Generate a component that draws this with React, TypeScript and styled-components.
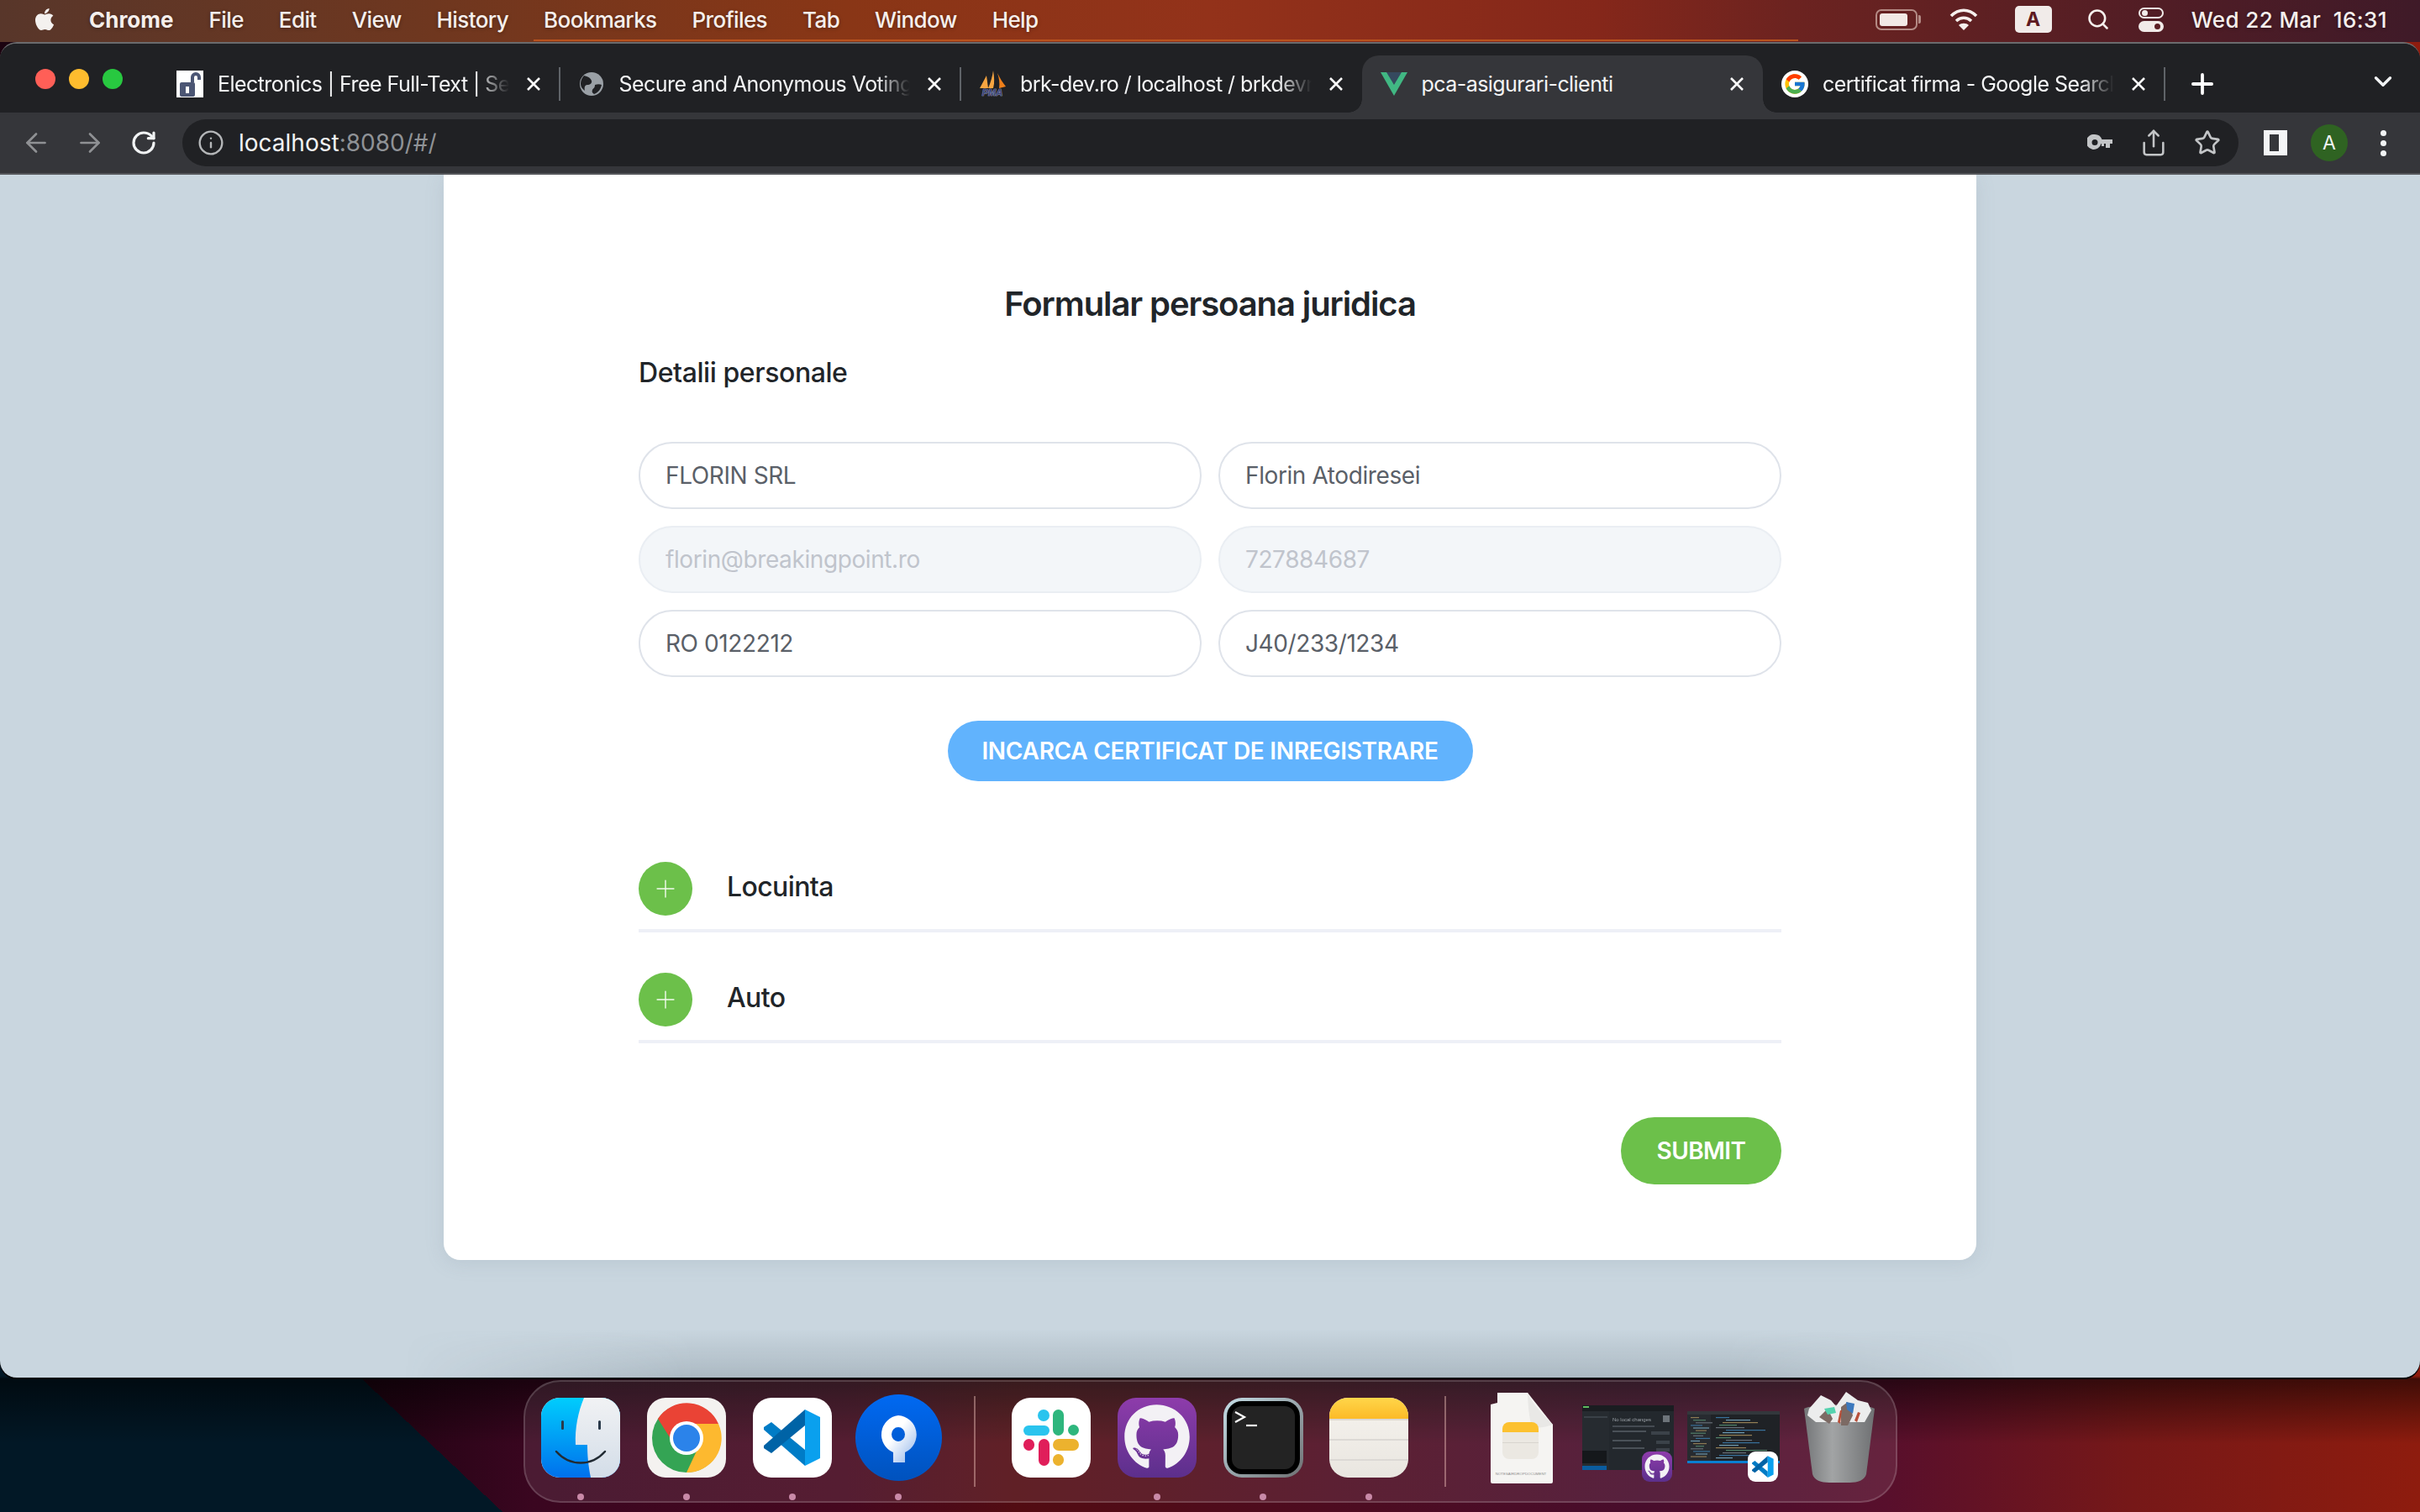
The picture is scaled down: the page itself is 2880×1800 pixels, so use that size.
import React from 'react';
import styled, { createGlobalStyle } from 'styled-components';
import { ArrowLeft, ArrowRight, ChevronDown, Info, Plus, RotateCw, Search, Share, Star } from 'lucide-react';
import { FaApple, FaGithub } from 'react-icons/fa';
import { FcGoogle } from 'react-icons/fc';

const GlobalStyle = createGlobalStyle`
    html, body {
        margin: 0;
        padding: 0;
        background: #000;
    }

    * {
        box-sizing: border-box;
    }
`;

const Desktop = styled.div`
    width: 2880px;
    height: 1800px;
    overflow: hidden;
    display: flex;
    flex-direction: column;
    font-family: Inter, 'Liberation Sans', sans-serif;
    background:
        linear-gradient(to bottom, transparent 91%, rgba(0, 0, 0, 0.55) 91.2%, transparent 95.5%),
        linear-gradient(43.4deg, #021826 0 411px, transparent 411px),
        linear-gradient(to right, #1c0310 14%, #3a0620 22%, #46081f 35%, #520c12 42%, #4d0c20 55%, #480d2c 68%, #580f2c 78%, #761818 88%, #8e1c0e 100%);
`;

const MenuBar = styled.div`
    position: relative;
    height: 50px;
    flex: none;
    display: flex;
    align-items: center;
    padding: 0 39px 4px 34px;
    color: #f5efec;
    font-size: 26px;
    text-shadow: 0 1px 4px rgba(0, 0, 0, 0.35);
    background: linear-gradient(to right, #58362a 0%, #6f371f 18%, #893616 35%, #93321a 50%, #85271a 66%, #6c2320 74%, #4c1c26 92%, #3f1a28 100%);

    &::after {
        content: '';
        position: absolute;
        left: 635px;
        right: 740px;
        bottom: 1px;
        height: 2px;
        background: #b9531f;
    }
`;

const AppleSlot = styled.div`
    width: 38px;
    display: flex;
    justify-content: center;
    color: #f4f1ef;
`;

const MenuItem = styled.span<{ $bold?: boolean }>`
    margin-left: 42px;
    font-weight: ${(p) => (p.$bold ? 700 : 500)};
    letter-spacing: ${(p) => (p.$bold ? '0' : '-0.6px')};
    white-space: nowrap;

    &:nth-child(2) {
        margin-left: 34px;
    }
`;

const MenuRight = styled.div`
    margin-left: auto;
    display: flex;
    align-items: center;
`;

const BatteryBox = styled.div`
    position: relative;
    width: 50px;
    height: 25px;
    margin-right: 38px;
    padding: 3px;
    border: 2px solid rgba(245, 225, 215, 0.55);
    border-radius: 7px;

    &::before {
        content: '';
        display: block;
        width: 33px;
        height: 15px;
        background: #f2e9e5;
        border-radius: 3px;
    }

    &::after {
        content: '';
        position: absolute;
        right: -6px;
        top: 5px;
        width: 3px;
        height: 10px;
        background: rgba(245, 225, 215, 0.55);
        border-radius: 0 2px 2px 0;
    }
`;

const InputBadge = styled.div`
    width: 44px;
    height: 32px;
    margin: 0 41px 0 44px;
    display: flex;
    align-items: center;
    justify-content: center;
    background: #f1ebe9;
    border-radius: 5px;
    color: #5e1a22;
    font-size: 23px;
    font-weight: 700;
    text-shadow: none;
`;

const ControlStack = styled.div`
    width: 30px;
    margin: 0 33px 0 34px;
    display: flex;
    flex-direction: column;
    gap: 3px;
`;

const ControlPill = styled.div<{ $on?: boolean }>`
    height: 13px;
    border-radius: 7px;
    background: ${(p) => (p.$on ? '#f1ebe9' : 'transparent')};
    border: 2px solid #f1ebe9;
    position: relative;

    &::after {
        content: '';
        position: absolute;
        top: 1px;
        width: 7px;
        height: 7px;
        border-radius: 50%;
        background: ${(p) => (p.$on ? '#5b1e24' : '#f1ebe9')};
        ${(p) => (p.$on ? 'right: 2px;' : 'left: 2px;')}
    }
`;

const Clock = styled.div`
    font-weight: 500;
    letter-spacing: 0.4px;
    white-space: pre;
`;

const BrowserWindow = styled.div`
    flex: none;
    height: 1590px;
    display: flex;
    flex-direction: column;
    background: #202124;
    border-radius: 20px;
    overflow: hidden;
    border-top: 2px solid #6a6b6d;
    box-shadow: 0 2px 0 #000;
`;

const TabStrip = styled.div`
    height: 82px;
    flex: none;
    display: flex;
    align-items: flex-end;
    position: relative;
    padding-left: 188px;
    background: #202124;
`;

const Lights = styled.div`
    position: absolute;
    left: 42px;
    top: 30px;
    display: flex;
    gap: 16px;
`;

const Light = styled.div<{ $color: string }>`
    width: 24px;
    height: 24px;
    border-radius: 50%;
    background: ${(p) => p.$color};
`;

const Tab = styled.div<{ $active?: boolean; $sep?: boolean }>`
    position: relative;
    width: 477.5px;
    height: 68px;
    flex: none;
    display: flex;
    align-items: center;
    padding: 0 22px;
    color: #f4f5f6;
    font-size: 25px;
    letter-spacing: -0.55px;
    background: ${(p) => (p.$active ? '#35363a' : 'transparent')};
    border-radius: 20px 20px 0 0;

    ${(p) =>
        p.$sep &&
        `
        &::after {
            content: '';
            position: absolute;
            right: -1px;
            top: 14px;
            width: 2px;
            height: 40px;
            background: #5f6368;
        }
    `}

    ${(p) =>
        p.$active &&
        `
        &::before, &::after {
            content: '';
            position: absolute;
            bottom: 0;
            width: 16px;
            height: 16px;
        }
        &::before {
            left: -16px;
            background: radial-gradient(circle at 0 0, transparent 15.5px, #35363a 16px);
        }
        &::after {
            right: -16px;
            background: radial-gradient(circle at 100% 0, transparent 15.5px, #35363a 16px);
        }
    `}
`;

const Favicon = styled.div`
    width: 32px;
    height: 32px;
    flex: none;
    margin-right: 17px;
    display: flex;
    align-items: center;
    justify-content: center;
`;

const TabTitle = styled.div<{ $fade?: boolean }>`
    flex: 1;
    min-width: 0;
    overflow: hidden;
    white-space: nowrap;
    margin-right: 16px;
    ${(p) =>
        p.$fade &&
        `
        mask-image: linear-gradient(to right, #000 calc(100% - 44px), transparent calc(100% - 4px));
    `}
`;

const CloseSvg = styled.svg`
    flex: none;
`;

const NewTab = styled.div`
    height: 68px;
    margin-left: 26px;
    display: flex;
    align-items: center;
    color: #fff;
`;

const TabMenu = styled.div`
    position: absolute;
    right: 27px;
    bottom: 16px;
    color: #f1f3f4;
`;

const Toolbar = styled.div`
    height: 74px;
    flex: none;
    display: flex;
    align-items: center;
    padding: 0 12px 0 11px;
    background: #35363a;
    border-bottom: 2px solid #55575b;
`;

const ToolSlot = styled.div<{ $dim?: boolean }>`
    width: 64px;
    height: 56px;
    flex: none;
    display: flex;
    align-items: center;
    justify-content: center;
    color: ${(p) => (p.$dim ? '#8f9194' : '#f1f3f4')};
`;

const AddressBar = styled.div`
    flex: 1;
    height: 56px;
    margin: 0 12px 0 14px;
    padding: 0 5px 0 18px;
    display: flex;
    align-items: center;
    background: #202124;
    border-radius: 28px;
`;

const Url = styled.div`
    margin-left: 17px;
    font-size: 28px;
    color: #f1f3f4;
    white-space: nowrap;

    span {
        color: #8f9296;
    }
`;

const AddressTools = styled.div`
    margin-left: auto;
    display: flex;
    color: #c3c5c7;
`;

const SidePanelGlyph = styled.div`
    width: 28px;
    height: 30px;
    background: #f4f5f6;
    padding: 5px 10px 5px 7px;

    &::before {
        content: '';
        display: block;
        width: 11px;
        height: 20px;
        background: #35363a;
    }
`;

const Avatar = styled.div`
    width: 44px;
    height: 44px;
    border-radius: 50%;
    background: #2f6322;
    color: #f1f3f4;
    font-size: 23px;
    display: flex;
    align-items: center;
    justify-content: center;
`;

const Dots = styled.div`
    display: flex;
    flex-direction: column;
    gap: 5px;

    i {
        width: 7px;
        height: 7px;
        border-radius: 50%;
        background: #f1f3f4;
    }
`;

const Content = styled.div`
    position: relative;
    flex: 1;
    background: #c9d6df;
    overflow: hidden;

    &::after {
        content: '';
        position: absolute;
        left: 480px;
        right: 480px;
        bottom: 0;
        height: 58px;
        background: linear-gradient(to bottom, transparent, rgba(70, 85, 95, 0.22));
        mask-image: linear-gradient(to right, transparent, #000 18%, #000 82%, transparent);
    }
`;

const Card = styled.div`
    width: 1824px;
    margin: 0 auto;
    padding: 130px 232px 90px;
    display: flex;
    flex-direction: column;
    background: #fff;
    border-radius: 0 0 20px 20px;
    box-shadow: 0 4px 22px rgba(120, 140, 155, 0.18);
    color: #212529;
`;

const Title = styled.h1`
    margin: 0;
    height: 48px;
    font-size: 40px;
    line-height: 48px;
    font-weight: 600;
    letter-spacing: -1.1px;
    text-align: center;
`;

const SectionTitle = styled.h2`
    margin: 38px 0 62px;
    height: 40px;
    font-size: 32px;
    line-height: 40px;
    font-weight: 500;
    letter-spacing: -0.42px;
`;

const FieldGrid = styled.div`
    display: grid;
    grid-template-columns: 1fr 1fr;
    gap: 20px;
`;

const Field = styled.input`
    width: 100%;
    height: 80px;
    padding: 0 30px;
    border: 2px solid #dfe3ea;
    border-radius: 40px;
    outline: none;
    background: #fff;
    color: #5a6068;
    font-family: Inter, 'Liberation Sans', sans-serif;
    font-size: 28px;
    letter-spacing: -0.4px;

    &:disabled {
        background: #f3f6f9;
        border-color: #eaeef3;
        color: #c0c4cc;
        -webkit-text-fill-color: #c0c4cc;
        opacity: 1;
    }
`;

const PillButton = styled.button<{ $color: string; $h: number; $track: number }>`
    height: ${(p) => p.$h}px;
    border: 0;
    border-radius: ${(p) => p.$h / 2}px;
    background: ${(p) => p.$color};
    color: #fff;
    font-family: Inter, 'Liberation Sans', sans-serif;
    font-size: 28px;
    font-weight: 600;
    letter-spacing: ${(p) => p.$track}px;
    white-space: nowrap;
`;

const UploadButton = styled(PillButton)`
    align-self: center;
    width: 625px;
    margin: 52px 0 96px;
`;

const SubmitButton = styled(PillButton)`
    align-self: flex-end;
    width: 191px;
    margin-top: 88px;
`;

const Accordion = styled.div`
    display: flex;
    align-items: center;
    gap: 41px;
    padding-bottom: 16px;
    border-bottom: 4px solid #eef0f7;

    & + & {
        margin-top: 48px;
    }
`;

const PlusDisc = styled.div`
    width: 64px;
    height: 64px;
    flex: none;
    border-radius: 50%;
    background: #6cc04a;
    color: #f2fbee;
    display: flex;
    align-items: center;
    justify-content: center;
`;

const AccordionLabel = styled.div`
    font-size: 32px;
    line-height: 40px;
    font-weight: 500;
    letter-spacing: -0.6px;
    transform: translateY(-2px);
`;

const DockRow = styled.div`
    flex: 1;
    display: flex;
    justify-content: flex-start;
    padding: 3px 0 0 623px;
`;

const Dock = styled.div`
    width: 1635px;
    height: 146px;
    padding-left: 3px;
    display: flex;
    align-items: flex-start;
    background: rgba(255, 255, 255, 0.085);
    border: 2px solid rgba(255, 255, 255, 0.16);
    border-radius: 44px;
`;

const DockItem = styled.div<{ $dot?: boolean }>`
    position: relative;
    width: 126px;
    height: 132px;
    flex: none;
    display: flex;
    align-items: center;
    justify-content: center;

    ${(p) =>
        p.$dot &&
        `
        &::after {
            content: '';
            position: absolute;
            left: 59px;
            bottom: -9px;
            width: 8px;
            height: 8px;
            border-radius: 50%;
            background: #c98aa8;
        }
    `}
`;

const DockDivider = styled.div`
    width: 56px;
    height: 108px;
    margin-top: 17px;
    flex: none;
    position: relative;

    &::after {
        content: '';
        position: absolute;
        left: 27px;
        width: 2px;
        height: 100%;
        background: rgba(255, 210, 200, 0.4);
    }
`;

const Tile = styled.div<{ $bg: string }>`
    width: 94px;
    height: 95px;
    border-radius: 22px;
    overflow: hidden;
    display: flex;
    align-items: center;
    justify-content: center;
    background: ${(p) => p.$bg};
`;

const BadgeTile = styled(Tile)`
    position: absolute;
    right: 10px;
    bottom: 13px;
    width: 36px;
    height: 36px;
    border-radius: 9px;
`;

const ThumbFrame = styled.div`
    filter: blur(0.4px);
    line-height: 0;
`;

const TerminalTile = styled.div`
    width: 95px;
    height: 95px;
    padding: 4px;
    border-radius: 22px;
    background: linear-gradient(135deg, #c4dde6, #6e7072);
`;

const TerminalScreen = styled.div`
    width: 100%;
    height: 100%;
    padding: 6px;
    border-radius: 18px;
    background: #000;
`;

const TerminalInner = styled.div`
    width: 100%;
    height: 100%;
    border-radius: 12px;
    background: #232323;
    line-height: 0;
`;

const NotesTile = styled.div`
    width: 94px;
    height: 95px;
    border-radius: 22px;
    overflow: hidden;
    display: flex;
    flex-direction: column;
    background: linear-gradient(to bottom, #f6f3ee, #e9e6e0);
`;

const NotesHead = styled.div`
    height: 25px;
    flex: none;
    background: linear-gradient(to bottom, #ffd64a, #fcba27);
`;

const NotesRule = styled.div<{ $top: number }>`
    height: 2px;
    margin-top: ${(p) => p.$top}px;
    background: #dcd9d5;
`;

const FaviconGoogle = styled.div`
    width: 32px;
    height: 32px;
    border-radius: 50%;
    background: #fff;
    display: flex;
    align-items: center;
    justify-content: center;
`;

const TABS = [
    {
        title: 'Electronics | Free Full-Text | Se',
        sep: true,
        fade: true,
        icon: (
            <svg width="32" height="32" viewBox="0 0 32 32">
                <rect width="32" height="32" fill="#fff" />
                <path d="M17 14v-6a6 6 0 0 1 12 0v3h-4V8a2 2 0 0 0-4 0v6z" fill="#4c5674" />
                <rect x="4" y="14" width="18" height="17" rx="2" fill="#4c5674" />
                <rect x="11" y="19" width="4" height="8" fill="#fff" />
            </svg>
        ),
    },
    {
        title: 'Secure and Anonymous Voting',
        sep: true,
        fade: true,
        icon: (
            <svg width="28" height="28" viewBox="0 0 28 28">
                <circle cx="14" cy="14" r="14" fill="#9aa0a6" />
                <path d="M5 4c5 1 8 3 9 6s-2 5-5 5-4 3-3 7c-3-2-5-5-5-8s1-7 4-10zM18 15c3-1 6-1 8 0-1 5-4 9-9 11-2-1-3-3-2-5s3-2 3-6z" fill="#202124" />
            </svg>
        ),
    },
    {
        title: 'brk-dev.ro / localhost / brkdevr',
        fade: true,
        icon: (
            <svg width="32" height="32" viewBox="0 0 32 32">
                <path d="M1 21L9 6l2 15z" fill="#f7a541" />
                <path d="M11 21c3-7 5-14 6-21 1 7 2 14 0 21z" fill="#f7a541" />
                <path d="M22 3c3 6 6 11 10 16l-8 2c1-6 0-12-2-18z" fill="#ee7f1a" />
                <text
                    x="16"
                    y="29.500"
                    textAnchor="middle"
                    fontFamily="Liberation Sans"
                    fontSize="11"
                    fontWeight="700"
                    fontStyle="italic"
                    letterSpacing="0"
                    fill="#39437a"
                    stroke="#b6bbd2"
                    strokeWidth="0.7"
                    paintOrder="stroke"
                >
                    PMA
                </text>
            </svg>
        ),
    },
    {
        title: 'pca-asigurari-clienti',
        active: true,
        icon: (
            <svg width="32" height="28" viewBox="0 0 32 28">
                <path d="M0 0h32L16 28z" fill="#41b883" />
                <path d="M7 0h18l-9 15z" fill="#35495e" />
            </svg>
        ),
    },
    {
        title: 'certificat firma - Google Searcl',
        sep: true,
        fade: true,
        icon: (
            <FaviconGoogle>
                <FcGoogle size={28} />
            </FaviconGoogle>
        ),
    },
];

function CloseGlyph() {
    return (
        <CloseSvg width="18" height="18" viewBox="0 0 18 18">
            <path d="M2 2l14 14M16 2L2 16" stroke="#fff" strokeWidth="2.6" />
        </CloseSvg>
    );
}

function WifiGlyph() {
    return (
        <svg width="34" height="26" viewBox="0 0 34 26" fill="none" stroke="#f6f0ed" strokeWidth="3.6">
            <path d="M2 9c9-9 21-9 30 0" />
            <path d="M8 15c5.500-5 12.500-5 18 0" />
            <path d="M17 26l-6-6c3-3 9-3 12 0z" fill="#f6f0ed" stroke="none" />
        </svg>
    );
}

function KeyGlyph() {
    return (
        <svg width="30" height="20" viewBox="0 0 30 20">
            <path fillRule="evenodd" d="M9 0a9 9 0 0 1 8.500 6H30v5h-3v5h-5v-5h-2v3h-3v-3h-.500A9 9 0 1 1 9 0zm0 6a3.500 3.500 0 1 0 0 7 3.500 3.500 0 0 0 0-7z" fill="#c3c5c7" />
        </svg>
    );
}

function FinderIcon() {
    return (
        <svg width="94" height="95" viewBox="0 0 94 95">
            <defs>
                <linearGradient id="finderBlue" x1="0" y1="0" x2="0" y2="1">
                    <stop offset="0" stopColor="#00cdfd" />
                    <stop offset="1" stopColor="#0070ec" />
                </linearGradient>
                <linearGradient id="finderGrey" x1="0" y1="0" x2="0" y2="1">
                    <stop offset="0" stopColor="#f1f2f4" />
                    <stop offset="1" stopColor="#d3dde8" />
                </linearGradient>
            </defs>
            <rect width="94" height="95" fill="url(#finderBlue)" />
            <path d="M51 0h43v95H59c-3-15-4-27-4-39H41c-1-20 3-39 10-56z" fill="url(#finderGrey)" />
            <rect x="24" y="27" width="3" height="11" rx="1.500" fill="#2a3a4a" />
            <rect x="68" y="27" width="3" height="11" rx="1.500" fill="#2a3a4a" />
            <path d="M18 64c16 18 42 18 58 0" fill="none" stroke="#222b33" strokeWidth="2.500" strokeLinecap="round" />
        </svg>
    );
}

function ChromeIcon() {
    return (
        <svg width="94" height="95" viewBox="0 0 94 95">
            <circle cx="47" cy="48" r="41" fill="#34a454" />
            <path d="M85 31A41 41 0 0 1 47 89L62 57 47 31z" fill="#fdb92f" />
            <path d="M13 25A41 41 0 0 1 85 31H47L32 55z" fill="#ea4335" />
            <circle cx="47" cy="48" r="20" fill="#fff" />
            <circle cx="47" cy="48" r="16" fill="#2b83ea" />
        </svg>
    );
}

function CodeIcon({ size = 94 }: { size?: number }) {
    return (
        <svg width={size} height={size} viewBox="0 0 94 94">
            <path d="M62 81V62L22 29l-9 6v3z" fill="#007cc6" />
            <path d="M62 14v19L22 66l-9-6v-3z" fill="#0063a6" />
            <path d="M62 14l18 9v49l-18 9z" fill="#0aa0ee" />
        </svg>
    );
}

function SourcetreeIcon() {
    return (
        <svg width="103" height="103" viewBox="0 0 103 103">
            <defs>
                <linearGradient id="stBlue" x1="0" y1="0" x2="0" y2="1">
                    <stop offset="0" stopColor="#0069f2" />
                    <stop offset="1" stopColor="#0052bd" />
                </linearGradient>
                <linearGradient id="stWhite" x1="0" y1="0" x2="1" y2="1">
                    <stop offset="0.4" stopColor="#ffffff" />
                    <stop offset="1" stopColor="#8fb4ea" />
                </linearGradient>
            </defs>
            <circle cx="51.500" cy="51.500" r="51.500" fill="url(#stBlue)" />
            <path fillRule="evenodd" d="M51 25a23 23 0 0 1 8 44v12H45V69a23 23 0 0 1 6-44zm0 14a8 8.500 0 1 0 0 17 8 8.500 0 0 0 0-17z" fill="url(#stWhite)" />
        </svg>
    );
}

function SlackIcon() {
    return (
        <svg width="94" height="95" viewBox="0 0 94 95">
            <g fill="#2ac4ee">
                <rect x="14" y="33" width="31" height="12" rx="6" />
                <rect x="31" y="14" width="14" height="14" rx="7" />
            </g>
            <g fill="#2eb67d">
                <rect x="49" y="14" width="13" height="31" rx="6.500" />
                <rect x="67" y="32" width="13" height="13" rx="6.500" />
            </g>
            <g fill="#e01e5a">
                <rect x="32" y="49" width="13" height="32" rx="6.500" />
                <rect x="14" y="49" width="13" height="14" rx="6.500" />
            </g>
            <g fill="#ecb22e">
                <rect x="49" y="49" width="31" height="14" rx="7" />
                <rect x="49" y="67" width="13" height="14" rx="6.500" />
            </g>
        </svg>
    );
}

function PromptGlyph() {
    return (
        <svg width="70" height="70" viewBox="0 0 70 70" fill="none" stroke="#fff" strokeWidth="2.200">
            <path d="M4 7l11 6-11 6" />
            <path d="M17 23h13" />
        </svg>
    );
}

function DocumentIcon() {
    return (
        <svg width="74" height="110" viewBox="0 0 74 110">
            <path d="M8 2h36l30 38v68a2 2 0 0 1-2 2H2a2 2 0 0 1-2-2V16l8-2z" fill="#f5f4f2" />
            <path d="M44 2c3 8 10 18 30 38-8 3-20 5-24 2-4-3-6-32-6-40z" fill="#e9e8e6" />
            <rect x="14" y="37" width="43" height="20" rx="8" fill="#fcc12f" />
            <rect x="14" y="49" width="43" height="32" rx="8" fill="#ebe8e2" />
            <rect x="14" y="49" width="43" height="6" fill="#ebe8e2" />
            <rect x="14" y="61" width="43" height="1" fill="#d8d5cf" />
            <text x="36" y="100" textAnchor="middle" fontFamily="Liberation Sans" fontSize="4.400" fill="#8d8d8d">NOTESAIRDROPDOCUMENT</text>
        </svg>
    );
}

function DesktopThumb() {
    return (
        <svg width="109" height="77" viewBox="0 0 109 77">
            <rect width="109" height="77" fill="#23282d" />
            <rect y="0" width="109" height="7" fill="#1a1d21" />
            <rect x="1" y="1" width="7" height="2" fill="#5fb95f" />
            <rect x="0" y="7" width="32" height="70" fill="#262b30" />
            <rect x="2" y="13" width="28" height="2" fill="#3a4148" />
            <rect x="0" y="54" width="29" height="15" fill="#15181b" />
            <rect x="0" y="72" width="29" height="5" fill="#0a5c9e" />
            <text x="36" y="19" fontFamily="Liberation Sans" fontSize="6" fill="#9aa0a6">No local changes</text>
            <rect x="36" y="24" width="50" height="2" fill="#454b52" />
            <rect x="36" y="30" width="40" height="2" fill="#4a5158" />
            <rect x="82" y="31" width="22" height="4" fill="#3b4249" />
            <rect x="36" y="41" width="34" height="2" fill="#4a5158" />
            <rect x="88" y="42" width="16" height="4" fill="#3b4249" />
            <rect x="36" y="50" width="38" height="2" fill="#4a5158" />
            <rect x="88" y="51" width="16" height="4" fill="#3b4249" />
            <rect x="96" y="12" width="8" height="8" fill="#6d747a" />
        </svg>
    );
}

function EditorThumb() {
    const tints = ['#3d7fb0', '#7fb3cc', '#a88f5e', '#5c9476', '#757e88'];
    return (
        <svg width="110" height="62" viewBox="0 0 110 62">
            <rect width="110" height="62" fill="#1f2226" />
            <rect width="110" height="4" fill="#33373c" />
            <rect x="0" y="4" width="28" height="55" fill="#272b30" />
            {Array.from({ length: 16 }).map((_, i) => (
                <rect key={i} x={4 + (i % 3) * 3} y={7 + i * 3.100} width={10 + (i * 5) % 11} height="1.200" fill={tints[(i + 2) % 5]} opacity="0.8" />
            ))}
            {Array.from({ length: 17 }).map((_, i) => (
                <rect key={i} x={34 + ((i * 7) % 4) * 4} y={7 + i * 3} width={16 + (i * 13) % 34} height="1.200" fill={tints[i % 5]} opacity="0.85" />
            ))}
            <rect y="59" width="110" height="3" fill="#0a7fd0" />
        </svg>
    );
}

function TrashIcon() {
    return (
        <svg width="84" height="108" viewBox="0 0 84 108">
            <defs>
                <linearGradient id="trashGlass" x1="0" y1="0" x2="1" y2="0">
                    <stop offset="0" stopColor="#747678" />
                    <stop offset="0.4" stopColor="#a2a4a5" />
                    <stop offset="1" stopColor="#6f7173" />
                </linearGradient>
            </defs>
            <path d="M0 20c8-6 76-6 84 0l-10 78c-2 7-10 10-20 10H30c-10 0-18-3-20-10z" fill="url(#trashGlass)" />
            <path d="M6 20L20 4l12 6 6 7L50 0l14 10 12 3 4 9-8 14-58 0-10-8z" fill="#eceded" />
            <path d="M18 30l10-10 6 12-4 6zM44 18l8-6 6 16-6 12-8 0z" fill="#7c6a64" />
            <path d="M24 20l12-2 2 7-10 2z" fill="#55d2ae" />
            <path d="M50 12l10 2-2 12-7-5z" fill="#3c79bd" />
            <path d="M40 36l3-14 2 0 -2 16zM60 34l4-10 3 1-4 11z" fill="#b8503a" />
        </svg>
    );
}

export default function App() {
    return (
        <Desktop>
            <GlobalStyle />
            <MenuBar>
                <AppleSlot>
                    <FaApple size={30} />
                </AppleSlot>
                <MenuItem $bold>Chrome</MenuItem>
                <MenuItem>File</MenuItem>
                <MenuItem>Edit</MenuItem>
                <MenuItem>View</MenuItem>
                <MenuItem>History</MenuItem>
                <MenuItem>Bookmarks</MenuItem>
                <MenuItem>Profiles</MenuItem>
                <MenuItem>Tab</MenuItem>
                <MenuItem>Window</MenuItem>
                <MenuItem>Help</MenuItem>
                <MenuRight>
                    <BatteryBox />
                    <WifiGlyph />
                    <InputBadge>A</InputBadge>
                    <Search size={28} color="#f6f0ed" strokeWidth={2.2} />
                    <ControlStack>
                        <ControlPill />
                        <ControlPill $on />
                    </ControlStack>
                    <Clock>Wed 22 Mar  16:31</Clock>
                </MenuRight>
            </MenuBar>

            <BrowserWindow>
                <TabStrip>
                    <Lights>
                        <Light $color="#ff5f57" />
                        <Light $color="#febc2e" />
                        <Light $color="#28c840" />
                    </Lights>
                    {TABS.map((tab) => (
                        <Tab key={tab.title} $active={tab.active} $sep={tab.sep}>
                            <Favicon>{tab.icon}</Favicon>
                            <TabTitle $fade={tab.fade}>{tab.title}</TabTitle>
                            <CloseGlyph />
                        </Tab>
                    ))}
                    <NewTab>
                        <Plus size={38} strokeWidth={2.4} />
                    </NewTab>
                    <TabMenu>
                        <ChevronDown size={34} strokeWidth={2.4} />
                    </TabMenu>
                </TabStrip>

                <Toolbar>
                    <ToolSlot $dim>
                        <ArrowLeft size={36} strokeWidth={1.8} />
                    </ToolSlot>
                    <ToolSlot $dim>
                        <ArrowRight size={36} strokeWidth={1.8} />
                    </ToolSlot>
                    <ToolSlot>
                        <RotateCw size={32} strokeWidth={2.4} />
                    </ToolSlot>
                    <AddressBar>
                        <Info size={32} color="#b5b7b9" strokeWidth={1.8} />
                        <Url>
                            localhost<span>:8080/#/</span>
                        </Url>
                        <AddressTools>
                            <ToolSlot>
                                <KeyGlyph />
                            </ToolSlot>
                            <ToolSlot>
                                <Share size={34} color="#c3c5c7" strokeWidth={1.8} />
                            </ToolSlot>
                            <ToolSlot>
                                <Star size={32} color="#c3c5c7" strokeWidth={2} />
                            </ToolSlot>
                        </AddressTools>
                    </AddressBar>
                    <ToolSlot>
                        <SidePanelGlyph />
                    </ToolSlot>
                    <ToolSlot>
                        <Avatar>A</Avatar>
                    </ToolSlot>
                    <ToolSlot>
                        <Dots>
                            <i />
                            <i />
                            <i />
                        </Dots>
                    </ToolSlot>
                </Toolbar>

                <Content>
                    <Card>
                        <Title>Formular persoana juridica</Title>
                        <SectionTitle>Detalii personale</SectionTitle>
                        <FieldGrid>
                            <Field readOnly value="FLORIN SRL" />
                            <Field readOnly value="Florin Atodiresei" />
                            <Field disabled value="florin@breakingpoint.ro" />
                            <Field disabled value="727884687" />
                            <Field readOnly value="RO 0122212" />
                            <Field readOnly value="J40/233/1234" />
                        </FieldGrid>
                        <UploadButton $color="#61b3fd" $h={72} $track={-0.27}>
                            INCARCA CERTIFICAT DE INREGISTRARE
                        </UploadButton>
                        <Accordion>
                            <PlusDisc>
                                <Plus size={34} strokeWidth={1} />
                            </PlusDisc>
                            <AccordionLabel>Locuinta</AccordionLabel>
                        </Accordion>
                        <Accordion>
                            <PlusDisc>
                                <Plus size={34} strokeWidth={1} />
                            </PlusDisc>
                            <AccordionLabel>Auto</AccordionLabel>
                        </Accordion>
                        <SubmitButton $color="#6cc04a" $h={80} $track={-0.55}>
                            SUBMIT
                        </SubmitButton>
                    </Card>
                </Content>
            </BrowserWindow>

            <DockRow>
                <Dock>
                    <DockItem $dot>
                        <Tile $bg="#fff">
                            <FinderIcon />
                        </Tile>
                    </DockItem>
                    <DockItem $dot>
                        <Tile $bg="#f4f2f0">
                            <ChromeIcon />
                        </Tile>
                    </DockItem>
                    <DockItem $dot>
                        <Tile $bg="#fff">
                            <CodeIcon />
                        </Tile>
                    </DockItem>
                    <DockItem $dot>
                        <SourcetreeIcon />
                    </DockItem>
                    <DockDivider />
                    <DockItem>
                        <Tile $bg="#fff">
                            <SlackIcon />
                        </Tile>
                    </DockItem>
                    <DockItem $dot>
                        <Tile $bg="linear-gradient(to bottom, #8e3cab, #5c2f8c)">
                            <FaGithub size={80} color="#f3f1f5" />
                        </Tile>
                    </DockItem>
                    <DockItem $dot>
                        <TerminalTile>
                            <TerminalScreen>
                                <TerminalInner>
                                    <PromptGlyph />
                                </TerminalInner>
                            </TerminalScreen>
                        </TerminalTile>
                    </DockItem>
                    <DockItem $dot>
                        <NotesTile>
                            <NotesHead />
                            <NotesRule $top={0} />
                            <NotesRule $top={22} />
                            <NotesRule $top={22} />
                        </NotesTile>
                    </DockItem>
                    <DockDivider />
                    <DockItem>
                        <DocumentIcon />
                    </DockItem>
                    <DockItem>
                        <ThumbFrame>
                            <DesktopThumb />
                        </ThumbFrame>
                        <BadgeTile $bg="linear-gradient(to bottom, #8e3cab, #5c2f8c)">
                            <FaGithub size={30} color="#f3f1f5" />
                        </BadgeTile>
                    </DockItem>
                    <DockItem>
                        <ThumbFrame>
                            <EditorThumb />
                        </ThumbFrame>
                        <BadgeTile $bg="#fff">
                            <CodeIcon size={36} />
                        </BadgeTile>
                    </DockItem>
                    <DockItem>
                        <TrashIcon />
                    </DockItem>
                </Dock>
            </DockRow>
        </Desktop>
    );
}
